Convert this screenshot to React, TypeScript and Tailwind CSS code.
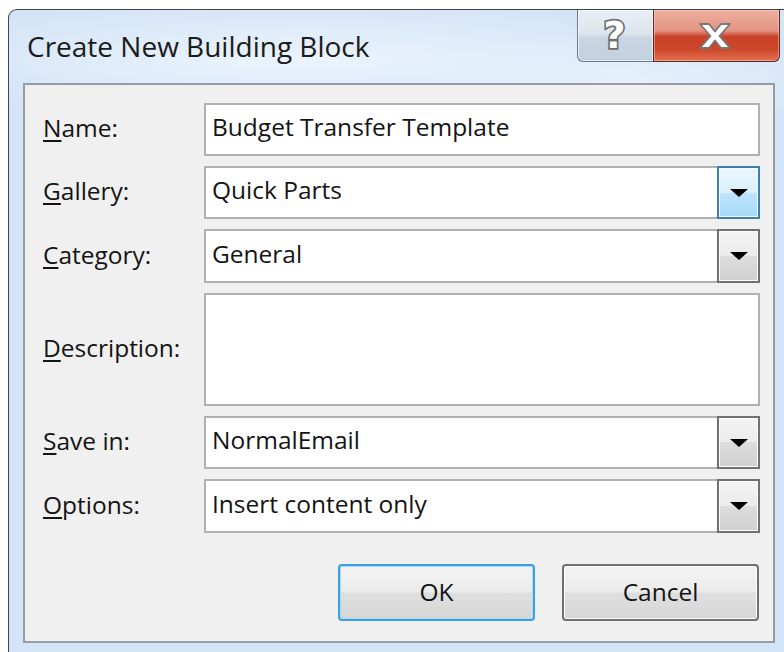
import React from "react";

const ink = "text-[#141414]";

function Mnemonic({ k, rest }: { k: string; rest: string }) {
  return (
    <span className={`text-[24.5px] leading-none ${ink} -mt-[2px]`}>
      <span className="underline decoration-[1.5px] underline-offset-[3px]">{k}</span>
      {rest}
    </span>
  );
}

function Arrow() {
  return (
    <svg width="18" height="8" viewBox="0 0 18 8">
      <path d="M0 0H18L9 8Z" fill="#000" />
    </svg>
  );
}

function DropButton({ active }: { active?: boolean }) {
  return active ? (
    <div className="-my-[2px] -mr-[2px] w-[43px] shrink-0 border-2 border-[#3c7fb1] bg-[linear-gradient(#eaf6fd_0%,#d9f0fc_50%,#bee6fd_50%,#a7d9f5_100%)] shadow-[inset_0_0_0_1px_#f4fbff] flex items-center justify-center">
      <Arrow />
    </div>
  ) : (
    <div className="-my-[2px] -mr-[2px] w-[43px] shrink-0 border-2 border-[#707070] bg-[linear-gradient(#f4f4f4_0%,#ebebeb_50%,#dddddd_50%,#d0d0d0_100%)] shadow-[inset_0_0_0_1px_#fbfbfb] flex items-center justify-center">
      <Arrow />
    </div>
  );
}

function Field({ value, combo, active }: { value: string; combo?: boolean; active?: boolean }) {
  return (
    <div className="flex h-full border-2 border-[#b1b1b1] bg-white">
      <div className="flex-1 flex items-center pl-[6px]">
        <span className={`text-[24.5px] leading-none ${ink} -mt-[4px]`}>{value}</span>
      </div>
      {combo && <DropButton active={active} />}
    </div>
  );
}

function Label({ k, rest }: { k: string; rest: string }) {
  return (
    <div className="flex items-center pl-[18px]">
      <Mnemonic k={k} rest={rest} />
    </div>
  );
}

function HelpButton() {
  return (
    <div className="w-[76px] h-[52px] border border-t-0 border-r-0 border-[#6d7b8b] rounded-bl-[6px] bg-[linear-gradient(#e9eff5_0%,#dde5ee_45%,#c9d5e2_55%,#c3d0de_100%)] shadow-[inset_0_0_0_1px_rgba(255,255,255,0.55)] flex items-center justify-center">
      <span className="font-['DejaVu_Sans'] font-bold text-[38px] leading-none text-white [-webkit-text-stroke:3.5px_#6e6e6e] [paint-order:stroke_fill] -mt-[1px] -ml-[2px]">
        ?
      </span>
    </div>
  );
}

function CloseButton() {
  return (
    <div className="w-[127px] h-[52px] border border-t-0 border-[#5c2a22] rounded-br-[6px] bg-[linear-gradient(#eeaf9f_0%,#e39583_40%,#c9432a_52%,#cc4428_75%,#e1704f_100%)] shadow-[inset_0_0_0_1px_rgba(255,220,210,0.45)] flex items-center justify-center">
      <svg width="34" height="28" viewBox="0 0 34 28" className="-ml-[4px]">
        <polygon
          points="2,2 11,2 17,9.5 23,2 32,2 21.5,14 32,26 23,26 17,18.5 11,26 2,26 12.5,14"
          fill="#ffffff"
          stroke="#777777"
          strokeWidth="1.8"
          strokeLinejoin="round"
        />
      </svg>
    </div>
  );
}

function PushButton({ label, focused }: { label: string; focused?: boolean }) {
  return (
    <div
      className={
        focused
          ? "w-[197px] h-[57px] rounded-[4px] border-2 border-[#3c9fe0] shadow-[inset_0_0_0_1px_#a9dcf8] bg-[linear-gradient(#f3f3f3_0%,#ececec_48%,#dfdfdf_52%,#d6d6d6_100%)] flex items-center justify-center"
          : "w-[197px] h-[57px] rounded-[4px] border-2 border-[#707070] shadow-[inset_0_0_0_1px_#fbfbfb] bg-[linear-gradient(#f3f3f3_0%,#ececec_48%,#dfdfdf_52%,#d6d6d6_100%)] flex items-center justify-center"
      }
    >
      <span className={`text-[24.5px] leading-none ${ink}`}>{label}</span>
    </div>
  );
}

export default function App() {
  return (
    <div className="w-[784px] h-[652px] overflow-hidden bg-white pt-[9px] pl-[8px] font-['Open_Sans',sans-serif]">
      <div className="w-[781px] h-[660px] rounded-tl-[9px] border-l border-t border-[#3d4650] bg-[#d3e4f7] bg-[radial-gradient(ellipse_420px_60px_at_38%_50px,#ebf4fd_0%,rgba(235,244,253,0)_100%),radial-gradient(ellipse_260px_50px_at_80%_70px,#e4effb_0%,rgba(228,239,251,0)_100%)] bg-no-repeat">
        {/* title bar */}
        <div className="h-[73px] flex items-start">
          <div className="flex-1 pl-[18px] pt-[22px]">
            <span className="text-[28px] leading-none text-[#1b1b1b]">Create New Building Block</span>
          </div>
          <div className="flex mr-[9px]">
            <HelpButton />
            <CloseButton />
          </div>
        </div>

        {/* client area */}
        <div className="ml-[14px] w-[752px] h-[560px] border-2 border-[#959ca4] bg-[#f0f0f0] pt-[18px]">
          <div className="grid grid-cols-[179px_556px] grid-rows-[53px_53px_54px_113px_53px_54px] gap-y-[10px]">
            <Label k="N" rest="ame:" />
            <Field value="Budget Transfer Template" />

            <Label k="G" rest="allery:" />
            <Field value="Quick Parts" combo active />

            <Label k="C" rest="ategory:" />
            <Field value="General" combo />

            <Label k="D" rest="escription:" />
            <div className="border-2 border-[#b1b1b1] bg-white" />

            <Label k="S" rest="ave in:" />
            <Field value="NormalEmail" combo />

            <Label k="O" rest="ptions:" />
            <Field value="Insert content only" combo />
          </div>

          <div className="flex justify-end gap-[27px] mt-[31px] pr-[14px]">
            <PushButton label="OK" focused />
            <PushButton label="Cancel" />
          </div>
        </div>
      </div>
    </div>
  );
}
